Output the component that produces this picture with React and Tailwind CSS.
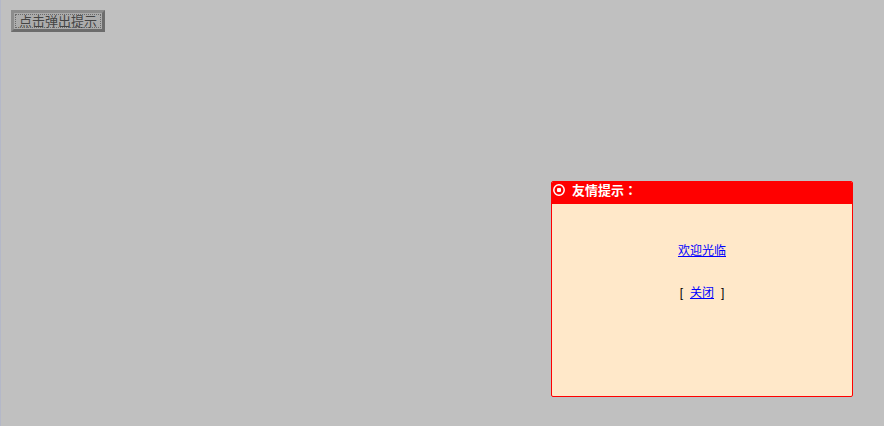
export default function App() {
  return (
    <div className="relative h-[426px] w-[884px] overflow-hidden border-l border-l-[#b4b8c8] bg-[#c0c0c0] font-['Liberation_Sans','Noto_Sans_CJK_SC',sans-serif]">
      <div className="pl-[10px] pt-[10px]">
        <button className="flex h-[22px] w-[94px] items-center justify-center border-[3px] border-solid border-t-[#8c8c8c] border-l-[#8c8c8c] border-r-[#6c6c6c] border-b-[#6c6c6c] bg-[#acacac] text-[13px] leading-none text-[#444] outline-1 outline-offset-[-5px] outline-dotted outline-[#6a6a6a]">
          点击弹出提示
        </button>
      </div>

      <div className="absolute left-[550px] top-[181px] h-[216px] w-[302px] overflow-hidden rounded-[2px] border border-[#ff0000] bg-[#ffe8c9]">
        <div className="flex h-[22px] items-start gap-[7px] bg-[#ff0000] pl-[1px] text-[13px] leading-[15px] font-bold text-white">
          <svg className="mt-[2px]" width="12" height="12" viewBox="0 0 12 12" fill="none">
            <circle cx="6" cy="6" r="5.2" stroke="#fff" strokeWidth="1.5" />
            <rect x="4" y="4" width="4" height="4" rx="1" fill="#fff" />
          </svg>
          <span>友情提示<span className="font-['Noto_Sans_CJK_TC',sans-serif]">：</span></span>
        </div>
        <div className="flex flex-col items-center pt-[39px] text-[12px] text-black">
          <a href="#" className="leading-[16px] text-[#0000ff] underline">欢迎光临</a>
          <div className="mt-[26px] flex gap-[7px] leading-[16px]">
            <span>[</span>
            <a href="#" className="text-[#0000ff] underline">关闭</a>
            <span>]</span>
          </div>
        </div>
      </div>
    </div>
  );
}
